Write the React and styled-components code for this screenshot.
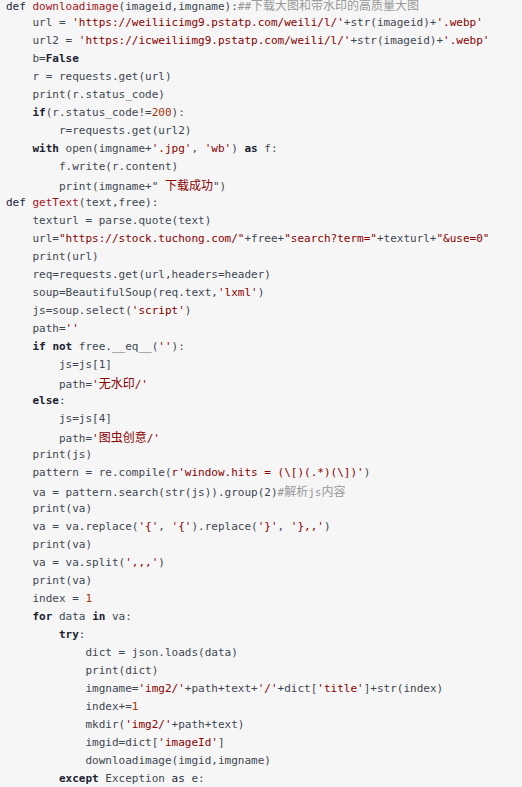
import React from "react";
import styled, { createGlobalStyle } from "styled-components";

const GlobalStyle = createGlobalStyle`
  html, body {
    margin: 0;
    padding: 0;
    background: #f6f6f6;
    overflow: hidden;
  }
`;

const Pre = styled.pre`
  margin: -4px 0 0 0;
  padding: 0 0 0 6px;
  width: 522px;
  height: 791px;
  box-sizing: border-box;
  background: #f6f6f6;
  font-family: "DejaVu Sans Mono", "Liberation Mono", monospace;
  font-size: 11px;
  color: #3d4752;
  overflow: hidden;
`;

const Line = styled.div`
  height: 18px;
  line-height: 18px;
  white-space: pre;
`;

const colors = {
  k: "#222640",
  b: "#1c2230",
  f: "#a3161c",
  s: "#880000",
  n: "#a3330c",
  c: "#999999",
};

const Tok = styled.span`
  color: ${(p) => colors[p.$kind]};
  font-weight: ${(p) => (p.$kind === "b" ? 700 : 400)};
`;

const Cjk = styled.span`
  font-family: "Noto Sans CJK SC", sans-serif;
  font-size: 12px;
`;

const source = [
  "⟨k|def⟩ ⟨f|downloadimage⟩(imageid,imgname):⟨c|##下载大图和带水印的高质量大图⟩",
  "    url = ⟨s|'https://weiliicimg9.pstatp.com/weili/l/'⟩+str(imageid)+⟨s|'.webp'⟩",
  "    url2 = ⟨s|'https://icweiliimg9.pstatp.com/weili/l/'⟩+str(imageid)+⟨s|'.webp'⟩",
  "    b=⟨b|False⟩",
  "    r = requests.get(url)",
  "    print(r.status_code)",
  "    ⟨b|if⟩(r.status_code!=⟨n|200⟩):",
  "        r=requests.get(url2)",
  "    ⟨b|with⟩ open(imgname+⟨s|'.jpg'⟩, ⟨s|'wb'⟩) ⟨b|as⟩ f:",
  "        f.write(r.content)",
  '        print(imgname+" ⟨s|下载成功⟩")',
  "⟨k|def⟩ ⟨f|getText⟩(text,free):",
  "    texturl = parse.quote(text)",
  '    url=⟨s|"https://stock.tuchong.com/"⟩+free+⟨s|"search?term="⟩+texturl+⟨s|"&use=0"⟩',
  "    print(url)",
  "    req=requests.get(url,headers=header)",
  "    soup=BeautifulSoup(req.text,⟨s|'lxml'⟩)",
  "    js=soup.select(⟨s|'script'⟩)",
  "    path=⟨s|''⟩",
  "    ⟨b|if⟩ ⟨b|not⟩ free.__eq__(⟨s|''⟩):",
  "        js=js[1]",
  "        path=⟨s|'无水印/'⟩",
  "    ⟨b|else⟩:",
  "        js=js[4]",
  "        path=⟨s|'图虫创意/'⟩",
  "    print(js)",
  "    pattern = re.compile(⟨s|r'window.hits = (\\[)(.*)(\\])'⟩)",
  "    va = pattern.search(str(js)).group(2)⟨c|#解析js内容⟩",
  "    print(va)",
  "    va = va.replace(⟨s|'{'⟩, ⟨s|'{'⟩).replace(⟨s|'}'⟩, ⟨s|'},,'⟩)",
  "    print(va)",
  "    va = va.split(⟨s|',,,'⟩)",
  "    print(va)",
  "    index = ⟨n|1⟩",
  "    ⟨b|for⟩ data ⟨b|in⟩ va:",
  "        ⟨b|try⟩:",
  "            dict = json.loads(data)",
  "            print(dict)",
  "            imgname=⟨s|'img2/'⟩+path+text+⟨s|'/'⟩+dict[⟨s|'title'⟩]+str(index)",
  "            index+=⟨n|1⟩",
  "            mkdir(⟨s|'img2/'⟩+path+text)",
  "            imgid=dict[⟨s|'imageId'⟩]",
  "            downloadimage(imgid,imgname)",
  "        ⟨b|except⟩ Exception ⟨k|as⟩ e:",
];

// wrap runs of CJK characters so they get a CJK font at the right size
const withCjk = (text, key) =>
  text.split(/([\u4e00-\u9fff]+)/).map((part, i) =>
    /[\u4e00-\u9fff]/.test(part) ? (
      <Cjk key={key + "-" + i}>{part}</Cjk>
    ) : (
      part
    )
  );

const renderLine = (line) => {
  const out = [];
  const re = /⟨(\w)\|(.*?)⟩/g;
  let last = 0;
  let m;
  let n = 0;
  while ((m = re.exec(line))) {
    if (m.index > last) out.push(...withCjk(line.slice(last, m.index), "t" + n++));
    out.push(
      <Tok key={"k" + n++} $kind={m[1]}>
        {withCjk(m[2], "s" + n)}
      </Tok>
    );
    last = re.lastIndex;
  }
  if (last < line.length) out.push(...withCjk(line.slice(last), "t" + n++));
  return out;
};

const App = () => {
  return (
    <>
      <GlobalStyle />
      <Pre>
        {source.map((line, i) => (
          <Line key={i}>{renderLine(line)}</Line>
        ))}
      </Pre>
    </>
  );
};

export default App;
